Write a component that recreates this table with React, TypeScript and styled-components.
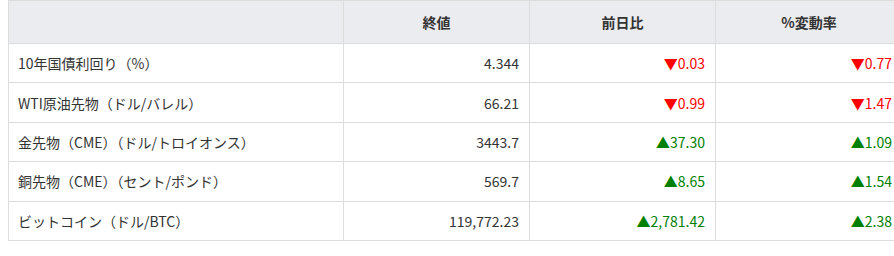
import React from 'react';
import styled, { createGlobalStyle } from 'styled-components';

const GlobalStyle = createGlobalStyle`
  html {
    overflow: hidden;
  }
  body {
    margin: 0;
    background: #fff;
    font-family: "Noto Sans CJK JP", "Noto Sans", sans-serif;
    color: #333;
  }
`;

const Page = styled.div`
  width: 910px;
  padding-left: 8px;
`;

const Table = styled.table`
  width: 894px;
  border-collapse: collapse;
  table-layout: fixed;
  font-size: 14px;
  line-height: 20px;
`;

const HeadCell = styled.th`
  height: 42px;
  padding: 0 10px;
  background: #ebecef;
  border: 1px solid #dcdcdc;
  font-weight: 700;
  text-align: center;
  color: #333;
`;

const Cell = styled.td<{ $align?: 'left' | 'right' }>`
  height: 38.4px;
  padding: 0 10px 0 9px;
  border: 1px solid #dcdcdc;
  text-align: ${(p) => p.$align || 'right'};
  color: #333;
`;

const Change = styled.span<{ $up: boolean }>`
  color: ${(p) => (p.$up ? '#008000' : '#ff0000')};
`;

interface Quote {
  name: string;
  close: string;
  diff: string;
  pct: string;
  up: boolean;
}

const quotes: Quote[] = [
  { name: '10年国債利回り（%）', close: '4.344', diff: '0.03', pct: '0.77', up: false },
  { name: 'WTI原油先物（ドル/バレル）', close: '66.21', diff: '0.99', pct: '1.47', up: false },
  { name: '金先物（CME）（ドル/トロイオンス）', close: '3443.7', diff: '37.30', pct: '1.09', up: true },
  { name: '銅先物（CME）（セント/ポンド）', close: '569.7', diff: '8.65', pct: '1.54', up: true },
  { name: 'ビットコイン（ドル/BTC）', close: '119,772.23', diff: '2,781.42', pct: '2.38', up: true },
];

const ChangeValue: React.FC<{ up: boolean; value: string }> = ({ up, value }) => (
  <Change $up={up}>
    {up ? '▲' : '▼'}
    {value}
  </Change>
);

const App: React.FC = () => {
  return (
    <Page>
      <GlobalStyle />
      <Table>
        <colgroup>
          <col style={{ width: 335 }} />
          <col style={{ width: 186 }} />
          <col style={{ width: 186 }} />
          <col style={{ width: 187 }} />
        </colgroup>
        <thead>
          <tr>
            <HeadCell />
            <HeadCell>終値</HeadCell>
            <HeadCell>前日比</HeadCell>
            <HeadCell>%変動率</HeadCell>
          </tr>
        </thead>
        <tbody>
          {quotes.map((q) => (
            <tr key={q.name}>
              <Cell $align="left">{q.name}</Cell>
              <Cell>{q.close}</Cell>
              <Cell>
                <ChangeValue up={q.up} value={q.diff} />
              </Cell>
              <Cell>
                <ChangeValue up={q.up} value={q.pct} />
              </Cell>
            </tr>
          ))}
        </tbody>
      </Table>
    </Page>
  );
};

export default App;
